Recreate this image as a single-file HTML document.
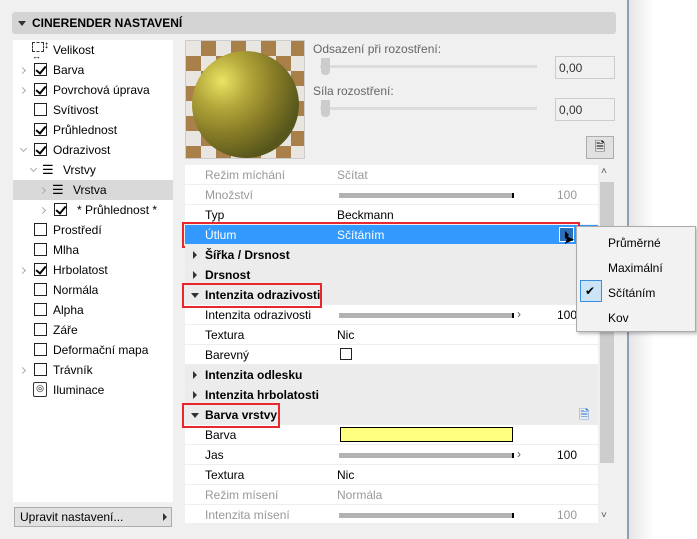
<!DOCTYPE html>
<html><head><meta charset="utf-8"><style>
*{margin:0;padding:0;box-sizing:border-box}
body{width:697px;height:539px;background:#f0f0f0;font-family:"Liberation Sans",sans-serif;font-size:12px;color:#000;position:relative;overflow:hidden}
.a{position:absolute;white-space:nowrap}
.hdr{left:12px;top:12px;width:604px;height:22px;background:#d4d4d4;border-radius:3px}
.hdr span{position:absolute;left:20px;top:4px;font-weight:bold;font-size:12px}
.tri{width:0;height:0;border-left:4px solid transparent;border-right:4px solid transparent;border-top:5px solid #333}
.rt{width:0;height:0;border-top:4px solid transparent;border-bottom:4px solid transparent;border-left:4px solid #333}
.tree{left:13px;top:40px;width:160px;height:462px;background:#fff}
.cb{position:absolute;width:13px;height:13px;border:1px solid #222;background:#fff}
.cb.k::after{content:"";position:absolute;left:3px;top:0px;width:4px;height:8px;border:solid #000;border-width:0 2px 2px 0;transform:rotate(40deg)}
.chev{position:absolute;width:5px;height:5px;border:solid #aaa;border-width:1.5px 1.5px 0 0;transform:rotate(45deg)}
.chev.d{transform:rotate(135deg)}
.props{left:185px;top:165px;width:413px;height:358px;background:#fff}
.row{position:absolute;left:185px;width:413px;height:20px;border-bottom:1px solid #eee}
.row .l{position:absolute;left:20px;top:3px}
.row .v{position:absolute;left:152px;top:3px}
.g{color:#999}
.grp{background:#ececec}
.grp .l{font-weight:bold}
.bar{position:absolute;left:154px;top:8px;width:175px;height:5px;background:#b3b3b3;border-right:2px solid #000}
.num{position:absolute;left:372px;top:3px}
.red{position:absolute;border:2px solid #e8262b}
</style></head><body>
<div class="a hdr"><div class="a tri" style="left:6px;top:9px"></div><span>CINERENDER NASTAVENÍ</span></div>
<div class="a" style="left:627px;top:0;width:2px;height:539px;background:#8da0b4"></div>
<div class="a" style="left:629px;top:0;width:68px;height:539px;background:linear-gradient(90deg,#e6e6e6,#fff 25px)"></div>

<div class="a tree"></div>
<div class="a" style="left:13px;top:180px;width:160px;height:20px;background:#d9d9d9"></div>
<div class="a" style="left:32px;top:42px;width:12px;height:10px;border:1px dashed #333"></div>
<div class="a" style="left:44px;top:40px;font-size:10px">↕</div>
<div class="a" style="left:32px;top:51px;font-size:9px">↔</div>
<div class="a" style="left:53px;top:43px">Velikost</div>

<div class="chev" style="left:20px;top:68px"></div><div class="cb k" style="left:34px;top:63px"></div><div class="a" style="left:53px;top:63px">Barva</div>
<div class="chev" style="left:20px;top:88px"></div><div class="cb k" style="left:34px;top:83px"></div><div class="a" style="left:53px;top:83px">Povrchová úprava</div>
<div class="cb" style="left:34px;top:103px"></div><div class="a" style="left:53px;top:103px">Svítivost</div>
<div class="cb k" style="left:34px;top:123px"></div><div class="a" style="left:53px;top:123px">Průhlednost</div>
<div class="chev d" style="left:21px;top:146px"></div><div class="cb k" style="left:34px;top:143px"></div><div class="a" style="left:53px;top:143px">Odrazivost</div>
<div class="chev d" style="left:31px;top:166px"></div><div class="a" style="left:42px;top:162px;font-size:13px">☰</div><div class="a" style="left:63px;top:163px">Vrstvy</div>
<div class="chev" style="left:40px;top:188px"></div><div class="a" style="left:52px;top:182px;font-size:13px">☰</div><div class="a" style="left:73px;top:183px">Vrstva</div>
<div class="chev" style="left:40px;top:208px"></div><div class="cb k" style="left:54px;top:203px"></div><div class="a" style="left:77px;top:203px">* Průhlednost *</div>
<div class="cb" style="left:34px;top:223px"></div><div class="a" style="left:53px;top:223px">Prostředí</div>
<div class="cb" style="left:34px;top:243px"></div><div class="a" style="left:53px;top:243px">Mlha</div>
<div class="chev" style="left:20px;top:268px"></div><div class="cb k" style="left:34px;top:263px"></div><div class="a" style="left:53px;top:263px">Hrbolatost</div>
<div class="cb" style="left:34px;top:283px"></div><div class="a" style="left:53px;top:283px">Normála</div>
<div class="cb" style="left:34px;top:303px"></div><div class="a" style="left:53px;top:303px">Alpha</div>
<div class="cb" style="left:34px;top:323px"></div><div class="a" style="left:53px;top:323px">Záře</div>
<div class="cb" style="left:34px;top:343px"></div><div class="a" style="left:53px;top:343px">Deformační mapa</div>
<div class="chev" style="left:20px;top:368px"></div><div class="cb" style="left:34px;top:363px"></div><div class="a" style="left:53px;top:363px">Trávník</div>
<div class="a" style="left:33px;top:382px;width:14px;height:15px;border:1px solid #333;border-radius:2px;font-size:9px;text-align:center">◎</div><div class="a" style="left:53px;top:383px">Iluminace</div>

<div class="a" style="left:14px;top:507px;width:158px;height:20px;background:#e1e1e1;border:1px solid #adadad"></div>
<div class="a" style="left:20px;top:510px">Upravit nastavení...</div>
<div class="a rt" style="left:163px;top:513px"></div>

<div class="a" style="left:185px;top:40px;width:120px;height:119px;border:1px solid #ccc;background:
repeating-conic-gradient(#a9804a 0 25%,#e9e6e1 0 50%) 0 0/30px 30px"></div>
<div class="a" style="left:192px;top:51px;width:107px;height:107px;border-radius:50%;background:radial-gradient(circle at 28% 28%,#e8e464 0,#b3a63a 25%,#857a26 50%,#55561c 75%,#636020 100%)"></div>

<div class="a" style="left:313px;top:42px;color:#666">Odsazení při rozostření:</div>
<div class="a" style="left:320px;top:65px;width:217px;height:3px;background:#dcdcdc"></div>
<div class="a" style="left:321px;top:58px;width:9px;height:17px;background:#ccc;border-radius:0 0 4px 4px"></div>
<div class="a" style="left:555px;top:56px;width:60px;height:23px;border:1px solid #ccc;background:#f0f0f0"></div>
<div class="a" style="left:559px;top:61px;color:#333">0,00</div>
<div class="a" style="left:313px;top:84px;color:#666">Síla rozostření:</div>
<div class="a" style="left:320px;top:107px;width:217px;height:3px;background:#dcdcdc"></div>
<div class="a" style="left:321px;top:100px;width:9px;height:17px;background:#ccc;border-radius:0 0 4px 4px"></div>
<div class="a" style="left:555px;top:98px;width:60px;height:23px;border:1px solid #ccc;background:#f0f0f0"></div>
<div class="a" style="left:559px;top:103px;color:#333">0,00</div>
<div class="a" style="left:586px;top:136px;width:28px;height:23px;border:1px solid #adadad;background:#e1e1e1;text-align:center;font-size:13px;line-height:20px">🗎</div>

<div class="a props"></div>
<div class="a" style="left:598px;top:165px;width:15px;height:358px;background:#f0f0f0"></div>
<div class="a" style="left:600px;top:182px;width:14px;height:281px;background:#cdcdcd"></div>
<div class="a" style="left:601px;top:166px;font-size:10px;color:#555">˄</div>
<div class="a" style="left:601px;top:510px;font-size:10px;color:#555">˅</div>

<div class="row" style="top:165px"><span class="l g">Režim míchání</span><span class="v g">Sčítat</span></div>
<div class="row" style="top:185px"><span class="l g">Množství</span><div class="bar"></div><span class="num g">100</span></div>
<div class="row" style="top:205px"><span class="l">Typ</span><span class="v">Beckmann</span></div>
<div class="row" style="top:225px;background:#3399ff;color:#fff"><span class="l">Útlum</span><span class="v">Sčítáním</span>
<div class="a" style="left:374px;top:2px;width:15px;height:15px;border:1px solid #fff;background:#2a6fb8"></div><div class="a rt" style="left:380px;top:6px;border-left-color:#000"></div></div>
<div class="red" style="left:182px;top:222px;width:398px;height:26px"></div>
<div class="row grp" style="top:245px"><div class="a rt" style="left:8px;top:6px"></div><span class="l">Šířka / Drsnost</span></div>
<div class="row grp" style="top:265px"><div class="a rt" style="left:8px;top:6px"></div><span class="l">Drsnost</span></div>
<div class="row grp" style="top:285px"><div class="a tri" style="left:6px;top:8px"></div><span class="l">Intenzita odrazivosti</span></div>
<div class="red" style="left:182px;top:283px;width:140px;height:25px"></div>
<div class="row" style="top:305px"><span class="l">Intenzita odrazivosti</span><div class="bar"></div><span class="a" style="left:332px;top:2px;color:#555">›</span><span class="num">100</span></div>
<div class="row" style="top:325px"><span class="l">Textura</span><span class="v">Nic</span></div>
<div class="row" style="top:345px"><span class="l">Barevný</span><div class="cb" style="left:155px;top:3px;width:12px;height:12px"></div></div>
<div class="row grp" style="top:365px"><div class="a rt" style="left:8px;top:6px"></div><span class="l">Intenzita odlesku</span></div>
<div class="row grp" style="top:385px"><div class="a rt" style="left:8px;top:6px"></div><span class="l">Intenzita hrbolatosti</span></div>
<div class="row grp" style="top:405px"><div class="a tri" style="left:6px;top:8px"></div><span class="l">Barva vrstvy</span><span class="a" style="left:394px;top:1px;color:#1e6fd9;font-size:13px">🗎</span></div>
<div class="red" style="left:182px;top:403px;width:98px;height:25px"></div>
<div class="row" style="top:425px"><span class="l">Barva</span><div class="a" style="left:155px;top:2px;width:173px;height:15px;background:#ffff80;border:1px solid #000"></div></div>
<div class="row" style="top:445px"><span class="l">Jas</span><div class="bar"></div><span class="a" style="left:332px;top:2px;color:#555">›</span><span class="num">100</span></div>
<div class="row" style="top:465px"><span class="l">Textura</span><span class="v">Nic</span></div>
<div class="row" style="top:485px"><span class="l g">Režim mísení</span><span class="v g">Normála</span></div>
<div class="row" style="top:505px"><span class="l g">Intenzita mísení</span><div class="bar"></div><span class="num g">100</span></div>

<div class="a" style="left:576px;top:226px;width:120px;height:106px;background:#f2f2f2;border:1px solid #aaa;box-shadow:2px 2px 3px rgba(0,0,0,.25)"></div>
<div class="a" style="left:608px;top:236px">Průměrné</div>
<div class="a" style="left:608px;top:261px">Maximální</div>
<div class="a" style="left:580px;top:280px;width:22px;height:22px;background:#cce4f7;border:1px solid #3d8ee0"></div>
<div class="a" style="left:585px;top:284px;font-size:12px">✔</div>
<div class="a" style="left:608px;top:286px">Sčítáním</div>
<div class="a" style="left:608px;top:311px">Kov</div>
<div class="a" style="left:563px;top:231px;font-size:14px">➤</div>
</body></html>
